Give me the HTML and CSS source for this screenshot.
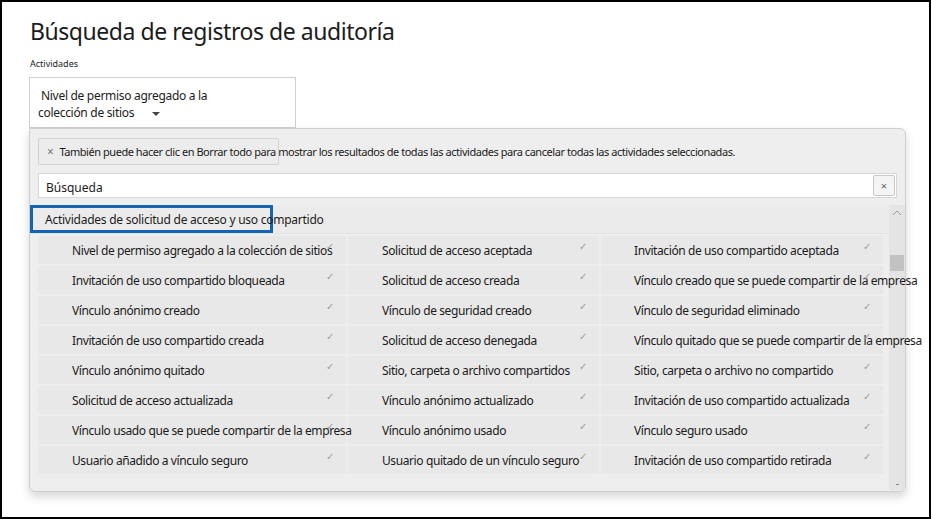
FILE: index.html
```html
<!DOCTYPE html>
<html lang="es">
<head>
<meta charset="utf-8">
<title>Búsqueda de registros de auditoría</title>
<link rel="stylesheet" href="styles.css">
</head>
<body>
<div class="frame">
  <h1 class="title">Búsqueda de registros de auditoría</h1>
  <div class="label">Actividades</div>
  <div class="dropdown">
    <div class="dd-line1">Nivel de permiso agregado a la</div>
    <div class="dd-line2">colección de sitios <span class="caret"></span></div>
  </div>
  <div class="panel">
    <div class="chip"><span class="chip-x">×</span><span class="chip-text">También puede hacer clic en Borrar todo para mostrar los resultados de todas las actividades para cancelar todas las actividades seleccionadas.</span></div>
    <div class="search">
      <span class="search-text">Búsqueda</span>
      <span class="clear">×</span>
    </div>
    <div class="list">
      <div class="list-main">
        <div class="group-head"><span>Actividades de solicitud de acceso y uso compartido</span></div>
        <div class="grid">
          <div class="cell"><span class="txt">Nivel de permiso agregado a la colección de sitios</span><span class="chk">✓</span></div>
          <div class="cell"><span class="txt">Solicitud de acceso aceptada</span><span class="chk">✓</span></div>
          <div class="cell"><span class="txt">Invitación de uso compartido aceptada</span><span class="chk">✓</span></div>

          <div class="cell"><span class="txt">Invitación de uso compartido bloqueada</span><span class="chk">✓</span></div>
          <div class="cell"><span class="txt">Solicitud de acceso creada</span><span class="chk">✓</span></div>
          <div class="cell"><span class="txt">Vínculo creado que se puede compartir de la empresa</span><span class="chk">✓</span></div>

          <div class="cell"><span class="txt">Vínculo anónimo creado</span><span class="chk">✓</span></div>
          <div class="cell"><span class="txt">Vínculo de seguridad creado</span><span class="chk">✓</span></div>
          <div class="cell"><span class="txt">Vínculo de seguridad eliminado</span><span class="chk">✓</span></div>

          <div class="cell"><span class="txt">Invitación de uso compartido creada</span><span class="chk">✓</span></div>
          <div class="cell"><span class="txt">Solicitud de acceso denegada</span><span class="chk">✓</span></div>
          <div class="cell"><span class="txt">Vínculo quitado que se puede compartir de la empresa</span><span class="chk">✓</span></div>

          <div class="cell"><span class="txt">Vínculo anónimo quitado</span><span class="chk">✓</span></div>
          <div class="cell"><span class="txt">Sitio, carpeta o archivo compartidos</span><span class="chk">✓</span></div>
          <div class="cell"><span class="txt">Sitio, carpeta o archivo no compartido</span><span class="chk">✓</span></div>

          <div class="cell"><span class="txt">Solicitud de acceso actualizada</span><span class="chk">✓</span></div>
          <div class="cell"><span class="txt">Vínculo anónimo actualizado</span><span class="chk">✓</span></div>
          <div class="cell"><span class="txt">Invitación de uso compartido actualizada</span><span class="chk">✓</span></div>

          <div class="cell"><span class="txt">Vínculo usado que se puede compartir de la empresa</span><span class="chk">✓</span></div>
          <div class="cell"><span class="txt">Vínculo anónimo usado</span><span class="chk">✓</span></div>
          <div class="cell"><span class="txt">Vínculo seguro usado</span><span class="chk">✓</span></div>

          <div class="cell"><span class="txt">Usuario añadido a vínculo seguro</span><span class="chk">✓</span></div>
          <div class="cell"><span class="txt">Usuario quitado de un vínculo seguro</span><span class="chk">✓</span></div>
          <div class="cell"><span class="txt">Invitación de uso compartido retirada</span><span class="chk">✓</span></div>
        </div>
      </div>
      <div class="scrollbar">
        <svg class="sb-up" width="10" height="6" viewBox="0 0 10 6"><path d="M1 5 L5 1 L9 5" fill="none" stroke="#9a9a9a" stroke-width="1"/></svg>
        <div class="sb-thumb"></div>
        <div class="sb-down"></div>
      </div>
    </div>
  </div>
</div>
</body>
</html>
```

FILE: styles.css
```css
* { box-sizing: border-box; }
html, body { margin: 0; padding: 0; background: #fff; }
body {
  font-family: "Noto Sans", "Open Sans", "Liberation Sans", sans-serif;
  color: #1b1b1b;
}
.frame {
  width: 931px;
  height: 519px;
  border: 2px solid #000;
  padding: 13px 0 0 27px;
  overflow: hidden;
}
.title {
  margin: 0;
  font-size: 23px;
  line-height: 32px;
  font-weight: 400;
  letter-spacing: -0.45px;
  padding-left: 1px;
}
.label {
  margin-top: 10px;
  font-size: 9px;
  line-height: 14px;
  padding-left: 1px;
}
.dropdown {
  margin-top: 6px;
  width: 267px;
  height: 51px;
  border: 1px solid #cfcfcf;
  background: #fff;
  padding-top: 9px;
  font-size: 12px;
  line-height: 17px;
  letter-spacing: -0.3px;
}
.dd-line1 { padding-left: 11px; }
.dd-line2 { padding-left: 8px; display: flex; align-items: center; gap: 18px; }
.caret {
  width: 0; height: 0;
  border-left: 4px solid transparent;
  border-right: 4px solid transparent;
  border-top: 4px solid #444;
  margin-top: 2px;
}
.panel {
  width: 877px;
  height: 364px;
  background: #eeeeee;
  border: 1px solid #cfcfcf;
  border-radius: 0 6px 6px 6px;
  box-shadow: 0 5px 10px rgba(0,0,0,0.16);
  padding: 9px 0 1px 0;
}
.chip {
  margin-left: 8px;
  width: 241px;
  height: 27px;
  border: 1px solid #d2d2d2;
  background: #ececec;
  border-radius: 2px;
  display: flex;
  align-items: center;
  white-space: nowrap;
  font-size: 11px;
  letter-spacing: -0.45px;
}
.chip-x { color: #777; font-size: 12px; margin-left: 8px; margin-right: 6px; }
.chip-text { color: #1b1b1b; }
.search {
  margin: 8px 0 0 8px;
  width: 859px;
  height: 25px;
  background: #fff;
  border: 1px solid #d6d6d6;
  display: flex;
  align-items: center;
  justify-content: space-between;
  font-size: 12px;
}
.search-text { padding-left: 7px; padding-top: 3px; }
.clear {
  width: 22px;
  height: 21px;
  margin-right: 1px;
  border: 1px solid #c9c9c9;
  border-radius: 2px;
  background: #f4f4f4;
  color: #666;
  font-size: 11px;
  display: flex;
  align-items: center;
  justify-content: center;
}
.list {
  margin-top: 7px;
  height: 285px;
  display: flex;
}
.list-main { width: 859px; position: relative; z-index: 2; }
.group-head {
  height: 29px;
  background: #ebebeb;
  border-bottom: 1px solid #e2e2e2;
}
.group-head span {
  display: block;
  width: 243px;
  height: 28px;
  border: 3px solid #1464b4;
  padding-left: 12px;
  font-size: 12px;
  line-height: 24px;
  white-space: nowrap;
  letter-spacing: -0.25px;
}
.grid {
  margin: 2px 0 0 8px;
  width: 843px;
  display: grid;
  grid-template-columns: 308px 251px 282px;
  grid-auto-rows: 28px;
  gap: 2px;
}
.cell {
  position: relative;
  background: #e8e8e8;
  display: flex;
  align-items: center;
  padding-left: 34px;
  font-size: 12px;
  white-space: nowrap;
  letter-spacing: -0.4px;
}
.cell:nth-child(3n+3) { padding-left: 33px; }
.txt { position: relative; z-index: 3; }
.chk {
  position: absolute;
  right: 12px;
  top: 5px;
  font-family: "DejaVu Sans", sans-serif;
  font-size: 10px;
  color: #9c9c9c;
  z-index: 4;
}
.scrollbar {
  width: 16px;
  height: 285px;
  background: #e4e4e4;
  display: flex;
  flex-direction: column;
  align-items: center;
  position: relative;
  z-index: 1;
}
.sb-up { margin-top: 5px; }
.sb-thumb {
  margin-top: 39px;
  width: 14px;
  height: 16px;
  background: #c2c2c2;
}
.sb-down {
  margin-top: auto;
  margin-bottom: 5px;
  width: 3px;
  height: 1px;
  background: #888;
}
```
